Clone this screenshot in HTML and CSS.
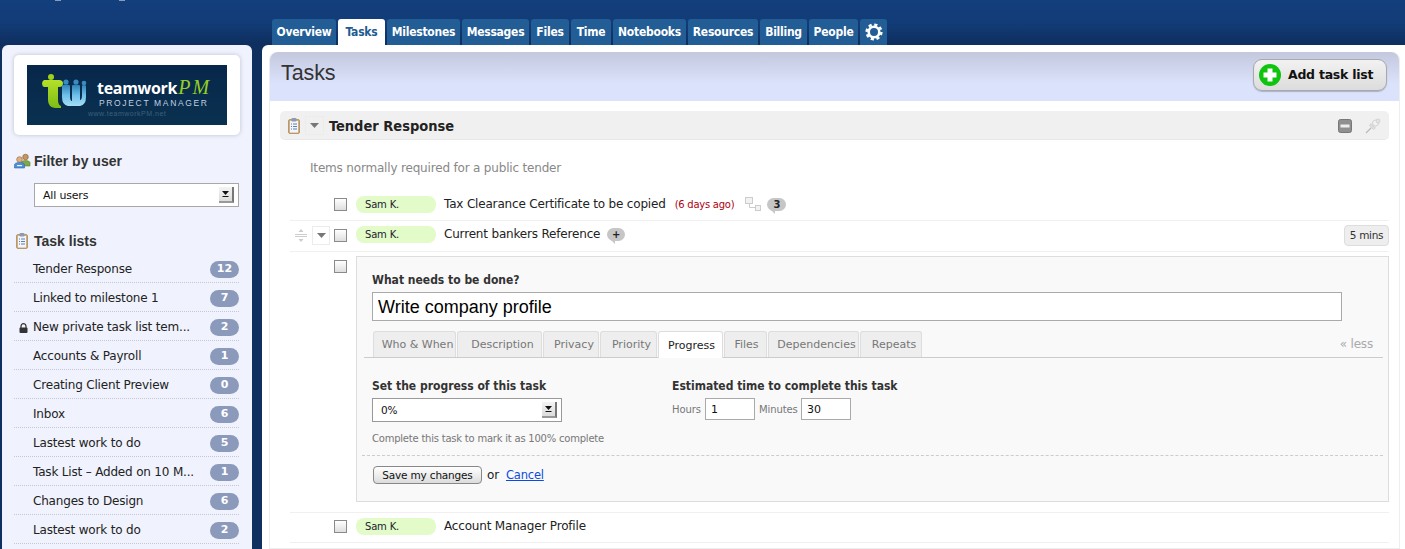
FILE: index.html
```html
<!DOCTYPE html>
<html lang="en">
<head>
<meta charset="utf-8">
<title>Tasks</title>
<link rel="stylesheet" href="styles.css">
</head>
<body>
<svg class="defs" width="0" height="0" aria-hidden="true">
  <defs>
    <symbol id="clip" viewBox="0 0 12 16">
      <rect x="0.5" y="1.5" width="11" height="14" rx="1.5" fill="#cdb083" stroke="#b89868"/>
      <rect x="2" y="3" width="8" height="11.5" fill="#f2f5fb"/>
      <rect x="3.5" y="0" width="5" height="3.5" rx="1" fill="#8d9bb0"/>
      <path d="M3 6h1M5 6h4M3 8.5h1M5 8.5h4M3 11h1M5 11h4" stroke="#5f7fb5" stroke-width="1"/>
    </symbol>
    <symbol id="arrow" viewBox="0 0 9 5">
      <path d="M0 0h9L4.500 5z" fill="#777"/>
    </symbol>
    <symbol id="selbtn" viewBox="0 0 7 6">
      <path d="M0 0h7L3.500 4z" fill="#111"/>
      <rect x="0.500" y="5" width="6" height="1" fill="#111"/>
    </symbol>
  </defs>
</svg>

<header class="top">
  <div class="crumbs"><span class="crumb"></span><span class="crumb crumb-b"></span></div>
  <nav class="tabs">
    <a class="tab">Overview</a>
    <a class="tab tab-on">Tasks</a>
    <a class="tab">Milestones</a>
    <a class="tab">Messages</a>
    <a class="tab">Files</a>
    <a class="tab">Time</a>
    <a class="tab">Notebooks</a>
    <a class="tab">Resources</a>
    <a class="tab">Billing</a>
    <a class="tab">People</a>
    <a class="tab" aria-label="Settings">
      <svg width="18" height="18" viewBox="0 0 18 18">
        <circle cx="9" cy="9" r="5.300" fill="none" stroke="#fff" stroke-width="2.600"/>
        <circle cx="9" cy="9" r="7.400" fill="none" stroke="#fff" stroke-width="2.400" stroke-dasharray="3.200 2.610"/>
      </svg>
    </a>
  </nav>
</header>

<div class="layout">
  <aside class="side">
    <div class="logo-card">
      <div class="logo">
        <svg class="logo-figs" width="46" height="34" viewBox="0 0 46 34">
          <defs>
            <linearGradient id="gb" x1="0" y1="0" x2="0" y2="1"><stop offset="0" stop-color="#2f7fb5"/><stop offset=".5" stop-color="#6cc0ea"/><stop offset="1" stop-color="#a6def5"/></linearGradient>
            <linearGradient id="gg" x1="0" y1="0" x2="0" y2="1"><stop offset="0" stop-color="#b5e02a"/><stop offset="1" stop-color="#7ebc14"/></linearGradient>
          </defs>
          <circle cx="9" cy="3" r="3" fill="#9ed11c"/>
          <path d="M2 6h15q4 0 4 3.500T17 13h-1v13q0 5 3 6v2h-6q-7-1-7-8V13H2q-2-1-2-3.500T2 6z" fill="url(#gg)"/>
          <circle cx="24" cy="8" r="2.600" fill="#3a8bc0"/>
          <circle cx="34" cy="8" r="2.600" fill="#3a8bc0"/>
          <circle cx="42" cy="9" r="2.300" fill="#3a8bc0"/>
          <path d="M20 12q0-1.500 4-1.500t4 1.500v10q0 5 2 5V12q0-1.500 4-1.500t4 1.500v14q2 0 2-5v-9q0-1 2-1t2 1v11q0 8-6 9H26q-6-1-6-9z" fill="url(#gb)"/>
        </svg>
        <div class="logo-words">
          <div class="logo-name"><span class="logo-tw">teamwork</span><span class="logo-pm">PM</span></div>
          <div class="logo-sub">PROJECT MANAGER</div>
        </div>
        <div class="logo-url">www.teamworkPM.net</div>
      </div>
    </div>

    <h2 class="side-h side-h-filter">
      <svg class="side-ico" width="17" height="16" viewBox="0 0 17 16">
        <circle cx="11.500" cy="4" r="2.800" fill="#c9955f" stroke="#7a5a30" stroke-width=".6"/>
        <path d="M7.500 13V9.500q0-2 4-2t4.500 2V13z" fill="#7ea84a" stroke="#5d7f30" stroke-width=".6"/>
        <circle cx="5.500" cy="6.500" r="2.800" fill="#e0b080" stroke="#8a6238" stroke-width=".6"/>
        <path d="M.5 15v-3q0-2.500 5-2.500t5 2.500v3z" fill="#4e8fd8" stroke="#2f66a8" stroke-width=".6"/>
        <rect x="3" y="12" width="5" height="1.200" fill="#e8f2ff"/>
      </svg>
      <span>Filter by user</span>
    </h2>
    <div class="sel sel-side"><span>All users</span><span class="sel-btn"><svg width="7" height="6"><use href="#selbtn"/></svg></span></div>

    <h2 class="side-h side-h-lists">
      <svg class="side-ico side-ico-clip" width="12" height="16"><use href="#clip"/></svg>
      <span>Task lists</span>
    </h2>
    <ul class="lists">
      <li class="li"><span class="li-name">Tender Response</span><span class="count">12</span></li>
      <li class="li"><span class="li-name">Linked to milestone 1</span><span class="count">7</span></li>
      <li class="li"><svg class="lock" width="9" height="10" viewBox="0 0 9 10"><path d="M2 5V3.200a2.500 2.500 0 0 1 5 0V5" fill="none" stroke="#333" stroke-width="1.200"/><rect x="0.500" y="4.500" width="8" height="5.500" rx="1" fill="#333"/></svg><span class="li-name">New private task list tem...</span><span class="count">2</span></li>
      <li class="li"><span class="li-name">Accounts &amp; Payroll</span><span class="count">1</span></li>
      <li class="li"><span class="li-name">Creating Client Preview</span><span class="count">0</span></li>
      <li class="li"><span class="li-name">Inbox</span><span class="count">6</span></li>
      <li class="li"><span class="li-name">Lastest work to do</span><span class="count">5</span></li>
      <li class="li"><span class="li-name">Task List – Added on 10 M...</span><span class="count">1</span></li>
      <li class="li"><span class="li-name">Changes to Design</span><span class="count">6</span></li>
      <li class="li"><span class="li-name">Lastest work to do</span><span class="count">2</span></li>
    </ul>
  </aside>

  <main class="main">
    <div class="inner">
      <div class="page-head">
        <h1 class="page-title">Tasks</h1>
        <button class="add-btn" type="button">
          <svg width="22" height="22" viewBox="0 0 22 22">
            <circle cx="11" cy="11" r="11" fill="#0ec40e"/>
            <path d="M8.500 4.500h5v4h4v5h-4v4h-5v-4h-4v-5h4z" fill="#fff"/>
          </svg>
          <span class="add-label">Add task list</span>
        </button>
      </div>

      <div class="group-head">
        <svg class="gh-clip" width="12" height="16"><use href="#clip"/></svg>
        <span class="gh-more"><svg width="9" height="5"><use href="#arrow"/></svg></span>
        <h3 class="gh-title">Tender Response</h3>
        <svg class="gh-min" width="14" height="14" viewBox="0 0 14 14">
          <rect x="0.500" y="0.500" width="13" height="13" rx="2" fill="#909090" stroke="#777"/>
          <rect x="2.500" y="5.500" width="9" height="3" fill="#eee"/>
        </svg>
        <svg class="gh-pin" width="16" height="16" viewBox="0 0 16 16">
          <path d="M1 15l5-5" stroke="#bbb" stroke-width="1.200"/>
          <path d="M4.500 7.500l4 4 2-1.500-4.500-4.500z" fill="#ddd" stroke="#c8c8c8" stroke-width=".6"/>
          <circle cx="10.500" cy="5" r="3" fill="#f2f2f2" stroke="#c4c4c4" stroke-width=".7"/>
          <circle cx="13" cy="3" r="2" fill="#e4e4e4" stroke="#c4c4c4" stroke-width=".6"/>
        </svg>
      </div>
      <p class="desc">Items normally required for a public tender</p>

      <div class="row">
        <span class="chk"></span>
        <span class="pill">Sam K.</span>
        <span class="t-text">Tax Clearance Certificate to be copied</span>
        <span class="late">(6 days ago)</span>
        <svg class="sub-ico" width="16" height="15" viewBox="0 0 16 15">
          <path d="M4.500 6v4.500H10" fill="none" stroke="#ccc"/>
          <rect x="0.500" y="0.500" width="7" height="6" fill="#f2f2f2" stroke="#ccc"/>
          <rect x="10.500" y="8.500" width="5" height="5" fill="#f2f2f2" stroke="#ccc"/>
        </svg>
        <span class="bubble bubble-n">3</span>
      </div>

      <div class="row row-open">
        <svg class="drag" width="12" height="15" viewBox="0 0 12 15">
          <path d="M0 6.500h12M0 8.500h12" stroke="#ccc"/>
          <path d="M6 1l2.500 3h-5zM6 14l2.500-3h-5z" fill="#ccc"/>
        </svg>
        <span class="more"><svg width="9" height="5"><use href="#arrow"/></svg></span>
        <span class="chk chk-b"></span>
        <span class="pill">Sam K.</span>
        <span class="t-text">Current bankers Reference</span>
        <span class="bubble bubble-plus">+</span>
        <span class="mins">5 mins</span>
      </div>

      <div class="form-row">
        <span class="chk chk-f"></span>
        <form class="form">
          <label class="f-label">What needs to be done?</label>
          <input class="f-title" type="text" value="Write company profile">
          <div class="f-tabs">
            <a class="f-tab">Who &amp; When</a>
            <a class="f-tab">Description</a>
            <a class="f-tab">Privacy</a>
            <a class="f-tab">Priority</a>
            <a class="f-tab f-tab-on">Progress</a>
            <a class="f-tab">Files</a>
            <a class="f-tab">Dependencies</a>
            <a class="f-tab">Repeats</a>
            <a class="f-less">« less</a>
          </div>
          <div class="f-cols">
            <div class="f-prog">
              <label class="f-label">Set the progress of this task</label>
              <div class="sel sel-prog"><span>0%</span><span class="sel-btn"><svg width="7" height="6"><use href="#selbtn"/></svg></span></div>
              <p class="f-help">Complete this task to mark it as 100% complete</p>
            </div>
            <div class="f-est">
              <label class="f-label">Estimated time to complete this task</label>
              <div class="f-time">
                <span class="f-unit">Hours</span><input class="f-num" type="text" value="1">
                <span class="f-unit f-unit-m">Minutes</span><input class="f-num" type="text" value="30">
              </div>
            </div>
          </div>
          <div class="f-actions">
            <button class="save" type="button">Save my changes</button>
            <span class="or">or</span>
            <a class="cancel" href="#">Cancel</a>
          </div>
        </form>
      </div>

      <div class="row">
        <span class="chk"></span>
        <span class="pill">Sam K.</span>
        <span class="t-text">Account Manager Profile</span>
      </div>
    </div>
  </main>
</div>
</body>
</html>
```
FILE: styles.css
```css
* { box-sizing: border-box; }
html, body { margin: 0; height: 549px; overflow: hidden; }
body {
  background: #0f305f;
  font-family: "DejaVu Sans", sans-serif;
  font-size: 12px;
  letter-spacing: -.18px;
  color: #222;
}
.defs { position: absolute; }
p, h1, h2, h3, ul { margin: 0; padding: 0; }

/* top bar */
.top {
  height: 45px;
  background: linear-gradient(#133f7c 0, #123c78 50%, #0e2e5e 100%);
  display: flex;
  flex-direction: column;
  justify-content: space-between;
}
.crumbs { display: flex; height: 1px; padding-left: 55px; }
.crumb { width: 6px; background: #8a9cb8; }
.crumb-b { margin-left: 58px; }
.tabs {
  display: grid;
  grid-template-columns: 64px 47px 73px 67px 38px 40px 73px 70px 47px 49px 27px;
  column-gap: 2px;
  margin-left: 272px;
  height: 26px;
}
.tab {
  background: #225d96;
  color: #fff;
  border-radius: 3px 3px 0 0;
  display: flex;
  align-items: center;
  justify-content: center;
  font-family: "DejaVu Sans Condensed", "DejaVu Sans", sans-serif;
  font-weight: bold;
  font-size: 12px;
  letter-spacing: -.25px;
}
.tab-on { background: #fff; color: #1f5b93; }

/* layout */
.layout {
  display: grid;
  grid-template-columns: 250px 1143px;
  column-gap: 10px;
  padding-left: 2px;
  height: 504px;
}

/* sidebar */
.side {
  background: #f0f3fd;
  border-radius: 6px 6px 0 0;
  padding: 10px 13px 0 12px;
  overflow: hidden;
}
.logo-card {
  height: 80px;
  width: 226px;
  background: #fff;
  border-radius: 5px;
  box-shadow: 0 0 4px rgba(90, 100, 130, .35);
  padding: 10px 13px;
}
.logo {
  position: relative;
  height: 60px;
  background: linear-gradient(#07274a, #0a3150);
  display: flex;
  padding: 9px 0 0 15px;
}
.logo-figs { flex: none; }
.logo-words { margin-left: 9px; margin-top: 3px; }
.logo-name { display: flex; align-items: baseline; line-height: 18px; }
.logo-tw { font: bold 16px "Open Sans", sans-serif; color: #fff; letter-spacing: -.3px; }
.logo-pm { font: italic 20px "Liberation Serif", serif; color: #93cf22; margin-left: 1px; letter-spacing: 2px; line-height: 16px; }
.logo-sub { font: 8.5px "Liberation Sans", sans-serif; color: #c0d0e0; letter-spacing: 1.65px; margin: -1px 0 0 2px; white-space: nowrap; }
.logo-url {
  position: absolute;
  left: 61px;
  top: 45px;
  font: 7px "Liberation Sans", sans-serif;
  color: #3d5f7a;
  letter-spacing: .5px;
}
.side-h {
  display: flex;
  align-items: center;
  font-family: "Liberation Sans", sans-serif;
  font-size: 14px;
  font-weight: bold;
  letter-spacing: 0;
  color: #333;
  height: 18px;
}
.side-h-filter { margin-top: 17px; }
.side-h-lists { margin-top: 25px; }
.side-ico { margin-right: 3px; flex: none; }
.side-ico-clip { margin: 0 6px 0 2px; }
.sel {
  display: flex;
  align-items: center;
  justify-content: space-between;
  background: #fff;
  border: 1px solid #a8a8a8;
  font-size: 11px;
  color: #111;
}
.sel-side { margin: 13px 0 0 20px; width: 205px; height: 24px; padding: 0 4px 0 8px; }
.sel-btn {
  width: 15px;
  height: 16px;
  background: linear-gradient(#f4f4f4, #dcdcdc);
  border-right: 2px solid #777;
  border-bottom: 2px solid #999;
  display: flex;
  align-items: center;
  justify-content: center;
}
.lists { list-style: none; margin-top: 4px; }
.li {
  position: relative;
  display: flex;
  align-items: center;
  justify-content: space-between;
  height: 29px;
  padding: 2px 0 0 19px;
  border-bottom: 1px dotted #c4c8d2;
  color: #222;
}
.li-name { white-space: nowrap; margin-top: -1px; }
.lock { position: absolute; left: 5px; top: 11px; }
.count {
  width: 29px;
  height: 17px;
  border-radius: 9px;
  background: #8b9abb;
  color: #fff;
  font-size: 11px;
  font-weight: bold;
  letter-spacing: 0;
  text-align: center;
  line-height: 16px;
  flex: none;
}

/* main */
.main { background: #fff; padding: 7px 5px 0 7px; border-radius: 6px 0 0 0; overflow: hidden; }
.inner {
  height: 100%;
  padding: 0 10px;
  border: 1px solid #eee;
  border-top: 0;
  border-radius: 8px 8px 0 0;
}
.page-head {
  margin: 0 -10px;
  height: 49px;
  background: linear-gradient(#c3c8de 0, #dbe2fb 65%, #dbe2fb 100%);
  border-radius: 8px 8px 0 0;
  display: flex;
  align-items: center;
  justify-content: space-between;
  padding: 0 12px 8px 11px;
}
.page-title {
  font: normal 21.5px "Liberation Sans", sans-serif;
  letter-spacing: -.1px;
  color: #333;
  margin-top: 2px;
}
.add-btn {
  display: flex;
  align-items: center;
  gap: 7px;
  width: 134px;
  height: 32px;
  padding: 0 0 0 5px;
  margin-top: 5px;
  border: 1px solid #a9a9a9;
  border-radius: 9px;
  background: linear-gradient(#f2f2f2, #dcdcdc);
  box-shadow: 0 1px 1px rgba(80, 90, 120, .35);
  font: bold 12.5px "DejaVu Sans", sans-serif;
  letter-spacing: -.25px;
  color: #111;
}
.add-label { margin-top: -2px; }
.group-head {
  margin-top: 10px;
  height: 29px;
  background: #f0f0f0;
  border-bottom: 1px solid #e8e8e8;
  border-radius: 5px;
  display: flex;
  align-items: center;
  padding: 1px 8px 0 8px;
}
.gh-more {
  width: 19px;
  height: 19px;
  margin: 0 5px;
  display: flex;
  align-items: center;
  justify-content: center;
  border: 1px solid #ececec;
}
.gh-title {
  font-family: "DejaVu Sans Condensed", "DejaVu Sans", sans-serif;
  font-size: 14.5px;
  font-weight: bold;
  letter-spacing: 0;
  color: #222;
  flex: 1;
}
.gh-min { margin-right: 13px; }
.desc { margin: 20px 0 0 30px; line-height: 16px; color: #888; height: 31px; }

.row {
  display: flex;
  align-items: flex-start;
  height: 30px;
  margin-left: 10px;
  padding: 5px 0 0 44px;
  border-bottom: 1px solid #f0f0f0;
  line-height: 17px;
}
.chk {
  width: 13px;
  height: 13px;
  margin: 2px 9px 0 0;
  border: 1px solid #8a8a8a;
  background: linear-gradient(#fff, #dedede);
  flex: none;
}
.chk-b { margin-top: 3px; }
.pill {
  width: 80px;
  height: 17px;
  margin-right: 8px;
  padding-left: 9px;
  border-radius: 8px;
  background: #e2fbc8;
  font-size: 10px;
  line-height: 17px;
  color: #223;
  flex: none;
}
.t-text { white-space: nowrap; color: #222; }
.late { margin-left: 9px; font-size: 10px; letter-spacing: -.25px; color: #b00010; line-height: 18px; }
.sub-ico { margin: 1px 0 0 11px; }
.bubble {
  position: relative;
  height: 13px;
  margin-top: 2px;
  border-radius: 7px;
  background: #c6c6c6;
  font-size: 10px;
  font-weight: bold;
  letter-spacing: 0;
  line-height: 13px;
  text-align: center;
  color: #222;
}
.bubble::after {
  content: "";
  position: absolute;
  left: 4px;
  bottom: -3px;
  border-top: 4px solid #c6c6c6;
  border-left: 4px solid transparent;
}
.bubble-n { width: 19px; margin-left: 6px; }
.bubble-plus { width: 18px; margin-left: 7px; }
.row-open { height: 31px; padding-left: 5px; }
.drag { margin: 2px 5px 0 0; }
.more {
  width: 18px;
  height: 19px;
  margin-right: 4px;
  display: flex;
  align-items: center;
  justify-content: center;
  border: 1px solid #ececec;
  flex: none;
}
.mins {
  margin: -1px 0 0 auto;
  width: 45px;
  height: 21px;
  border: 1px solid #ddd;
  border-radius: 4px;
  background: #eee;
  font-size: 10.5px;
  letter-spacing: -.3px;
  line-height: 19px;
  text-align: center;
  color: #333;
}
.form-row {
  display: flex;
  margin-left: 10px;
  padding: 4px 0 10px 44px;
  height: 261px;
  border-bottom: 1px solid #f0f0f0;
}
.chk-f { margin-top: 4px; }
.form {
  flex: 1;
  height: 246px;
  background: #f9f9f9;
  border: 1px solid #ddd;
  padding: 14px 5px 0 15px;
}
.f-label {
  display: block;
  font-family: "DejaVu Sans Condensed", "DejaVu Sans", sans-serif;
  font-weight: bold;
  font-size: 12px;
  letter-spacing: 0;
  line-height: 18px;
  color: #333;
  white-space: nowrap;
}
.f-title {
  display: block;
  width: 970px;
  height: 29px;
  margin-top: 3px;
  padding: 1px 5px 0;
  border: 1px solid #aaa;
  background: #fff;
  font: 18px "Liberation Sans", sans-serif;
  letter-spacing: 0;
  color: #000;
  border-radius: 0;
  outline: 0;
}
.f-tabs {
  display: flex;
  align-items: flex-end;
  height: 27px;
  margin: 10px 0 0 -8px;
  padding-left: 9px;
  border-bottom: 1px solid #ccc;
  position: relative;
}
.f-tab {
  display: flex;
  align-items: center;
  justify-content: center;
  height: 26px;
  margin-right: 1px;
  padding-left: 6px;
  background: #eee;
  border: 1px solid #ddd;
  border-bottom: 0;
  border-radius: 3px 3px 0 0;
  font-size: 11px;
  letter-spacing: 0;
  color: #777;
  white-space: nowrap;
}
.f-tab:nth-child(1) { width: 83px; }
.f-tab:nth-child(2) { width: 85px; }
.f-tab:nth-child(3) { width: 56px; }
.f-tab:nth-child(4) { width: 57px; }
.f-tab:nth-child(5) { width: 65px; }
.f-tab:nth-child(6) { width: 43px; padding-left: 2px; }
.f-tab:nth-child(7) { width: 91px; }
.f-tab:nth-child(8) { width: 62px; }
.f-tab-on {
  height: 27px;
  margin-bottom: -1px;
  padding-left: 2px;
  background: #fff;
  color: #222;
}
.f-less { margin: 0 10px 6px auto; font-size: 12px; color: #aaa; }
.f-cols { display: flex; margin-top: 19px; }
.f-prog { width: 300px; }
.sel-prog { width: 190px; height: 24px; margin-top: 3px; padding: 0 4px 0 8px; font-size: 10.5px; border-color: #999; }
.f-help { margin-top: 11px; font-size: 10px; letter-spacing: -.22px; line-height: 12px; color: #777; white-space: nowrap; }
.f-time { display: grid; grid-template-columns: 33px 50px 46px 50px; align-items: center; margin-top: 3px; }
.f-unit { font-size: 10px; letter-spacing: -.1px; color: #777; }
.f-unit-m { padding-left: 4px; }
.f-num {
  width: 50px;
  height: 22px;
  padding: 0 5px;
  border: 1px solid #aaa;
  background: #fff;
  font: 11px "DejaVu Sans", sans-serif;
  letter-spacing: 0;
  color: #111;
  border-radius: 0;
  outline: 0;
}
.f-actions {
  margin: 10px 0 0 -10px;
  padding: 10px 0 0 11px;
  border-top: 1px dashed #ccc;
  display: flex;
  align-items: center;
}
.save {
  width: 109px;
  height: 18px;
  padding: 0;
  border: 1px solid #888;
  border-radius: 4px;
  background: linear-gradient(#fff, #dcdcdc);
  font: 10.5px "DejaVu Sans", sans-serif;
  letter-spacing: -.18px;
  color: #111;
}
.or { margin-left: 5px; color: #222; }
.cancel { margin-left: 7px; font-size: 11.5px; color: #0b4be0; text-decoration: underline; }
```
